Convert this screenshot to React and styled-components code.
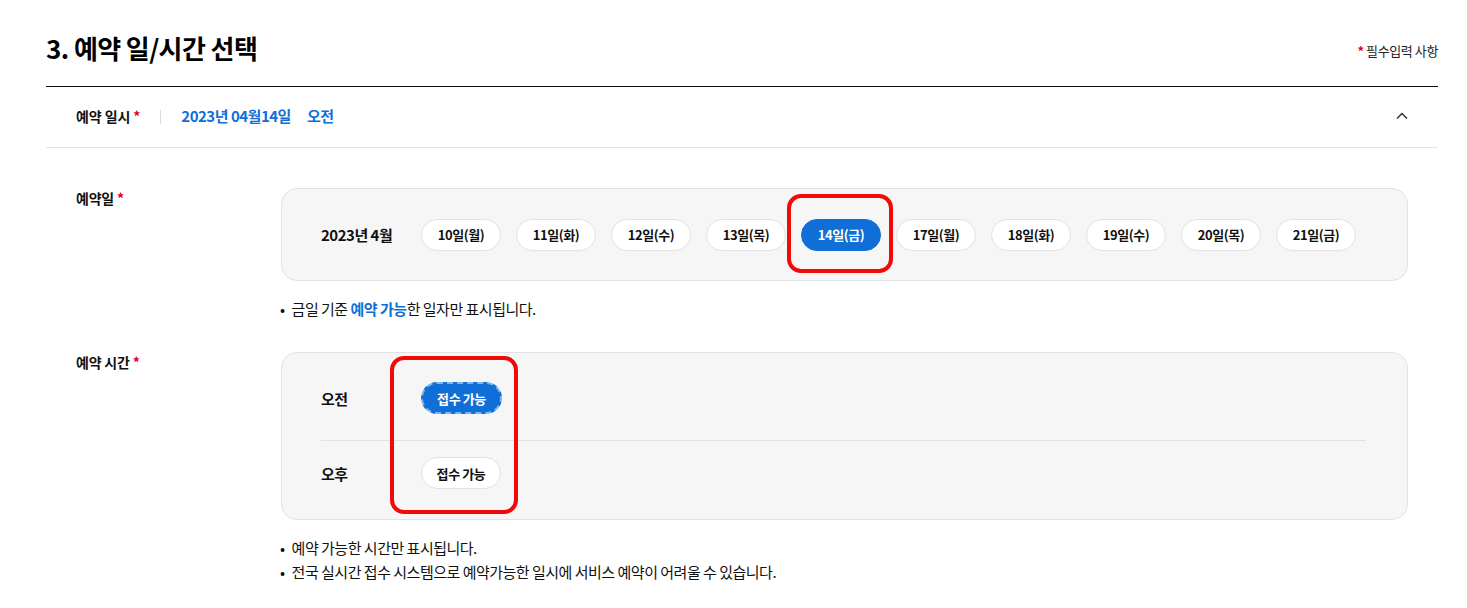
import React from 'react';
import styled, { createGlobalStyle } from 'styled-components';

const dates = ['10일(월)', '11일(화)', '12일(수)', '13일(목)', '14일(금)', '17일(월)', '18일(화)', '19일(수)', '20일(목)', '21일(금)'];
const selectedDate = '14일(금)';

const GlobalStyle = createGlobalStyle`
  body {
    margin: 0;
    background: #fff;
    font-family: 'Noto Sans CJK KR', 'Noto Sans', sans-serif;
    color: #111;
  }
`;

const App = () => (
  <>
    <GlobalStyle />
    <Page>
      <TitleRow>
        <Title>3. 예약 일/시간 선택</Title>
        <Required>
          <Star>*</Star> 필수입력 사항
        </Required>
      </TitleRow>

      <AccordionHeader>
        <HeaderLabel>
          예약 일시 <Star>*</Star>
        </HeaderLabel>
        <Divider />
        <Summary>2023년 04월14일</Summary>
        <Summary>오전</Summary>
        <Chevron width="14" height="14" viewBox="0 0 14 14">
          <polyline points="2,9.5 7,4.5 12,9.5" fill="none" stroke="#333" strokeWidth="1.5" />
        </Chevron>
      </AccordionHeader>

      <Body>
        <FieldLabel>
          예약일 <Star>*</Star>
        </FieldLabel>
        <div>
          <DateBox>
            <RowLabel>2023년 4월</RowLabel>
            <ChipList>
              {dates.map((d) => (
                <ChipWrap key={d}>
                  <Chip selected={d === selectedDate}>{d}</Chip>
                  {d === selectedDate && <DateMark />}
                </ChipWrap>
              ))}
            </ChipList>
          </DateBox>
          <Notes>
            <li>
              금일 기준 <Blue>예약 가능</Blue>한 일자만 표시됩니다.
            </li>
          </Notes>
        </div>

        <FieldLabel>
          예약 시간 <Star>*</Star>
        </FieldLabel>
        <div>
          <TimeBox>
            <TimeRow first>
              <RowLabel>오전</RowLabel>
              <Chip selected focused>접수 가능</Chip>
            </TimeRow>
            <TimeRow>
              <RowLabel>오후</RowLabel>
              <Chip>접수 가능</Chip>
            </TimeRow>
            <TimeMark />
          </TimeBox>
          <Notes>
            <li>예약 가능한 시간만 표시됩니다.</li>
            <li>전국 실시간 접수 시스템으로 예약가능한 일시에 서비스 예약이 어려울 수 있습니다.</li>
          </Notes>
        </div>
      </Body>
    </Page>
  </>
);

export default App;

const Page = styled.div`
  padding: 28px 29px 0 46px;
`;

const TitleRow = styled.div`
  display: flex;
  align-items: center;
  justify-content: space-between;
  height: 38px;
  padding-bottom: 20px;
  border-bottom: 1px solid #111;
`;

const Title = styled.h2`
  margin: 0;
  font-size: 26px;
  font-weight: 700;
  letter-spacing: -0.6px;
  color: #000;
`;

const Required = styled.span`
  font-size: 13px;
  color: #222;
  margin-top: 6px;
  letter-spacing: -0.4px;
`;

const Star = styled.span`
  color: #e0002a;
  font-weight: 700;
`;

const AccordionHeader = styled.div`
  display: flex;
  align-items: center;
  height: 60px;
  padding: 0 30px;
  border-bottom: 1px solid #e3e3e3;

  & > * {
    margin-top: -3px;
  }
`;

const HeaderLabel = styled.span`
  font-size: 14px;
  font-weight: 700;
  letter-spacing: -0.1px;
`;

const Divider = styled.span`
  width: 1px;
  height: 14px;
  background: #dcdcdc;
  margin: 0 20px;
`;

const Summary = styled.span`
  font-size: 15px;
  font-weight: 700;
  color: #0f6fd6;
  letter-spacing: -0.5px;
  margin-right: 16px;
`;

const Chevron = styled.svg`
  margin-left: auto;
  margin-right: -1px;
`;

const Body = styled.div`
  display: grid;
  grid-template-columns: 205px 1127px;
  row-gap: 31px;
  padding: 40px 30px 0;
`;

const FieldLabel = styled.div`
  font-size: 14px;
  font-weight: 700;
  line-height: 20px;
  letter-spacing: -0.2px;
`;

const Panel = styled.div`
  position: relative;
  background: #f6f6f6;
  border: 1px solid #e2e2e2;
  border-radius: 16px;
  box-sizing: border-box;
`;

const DateBox = styled(Panel)`
  display: flex;
  align-items: center;
  height: 93px;
  padding: 0 40px 0 39px;
`;

const RowLabel = styled.span`
  width: 100px;
  flex-shrink: 0;
  font-size: 15px;
  font-weight: 700;
  letter-spacing: -0.5px;
`;

const ChipList = styled.div`
  display: flex;
  gap: 15px;
`;

const ChipWrap = styled.div`
  position: relative;
`;

const Chip = styled.button`
  height: 32px;
  padding: 0;
  border-radius: 16px;
  box-sizing: border-box;
  font-family: inherit;
  font-size: 13px;
  font-weight: 700;
  letter-spacing: -0.4px;
  color: ${(p) => (p.selected ? '#fff' : '#111')};
  background: ${(p) => (p.selected ? '#0f6fd6' : '#fff')};
  border: ${(p) =>
    p.focused ? '2px dashed #7fb6f2' : p.selected ? '1px solid #0f6fd6' : '1px solid #e2e2e2'};
  width: ${(p) => (p.focused ? '81px' : '80px')};
`;

const Mark = styled.div`
  position: absolute;
  border: 4px solid #f00a0a;
  border-radius: 14px;
  box-sizing: border-box;
  pointer-events: none;
`;

const DateMark = styled(Mark)`
  left: -14px;
  top: -25px;
  width: 106px;
  height: 79px;
`;

const TimeMark = styled(Mark)`
  left: 108px;
  top: 3px;
  width: 128px;
  height: 158px;
`;

const TimeBox = styled(Panel)`
  height: 168px;
  padding: 29px 41px 0 39px;
`;

const TimeRow = styled.div`
  display: flex;
  align-items: center;
  height: 32px;
  padding: ${(p) => (p.first ? '0 0 26px' : '16px 0 0')};
  border-bottom: ${(p) => (p.first ? '1px solid #e2e2e2' : 'none')};
`;

const Notes = styled.ul`
  margin: 16px 0 0 -1px;
  padding: 0;
  list-style: none;
  font-size: 15px;
  line-height: 24px;
  color: #111;
  letter-spacing: -0.5px;

  li::before {
    content: '•';
    margin-right: 7px;
  }
`;

const Blue = styled.span`
  color: #0f6fd6;
  font-weight: 700;
`;
